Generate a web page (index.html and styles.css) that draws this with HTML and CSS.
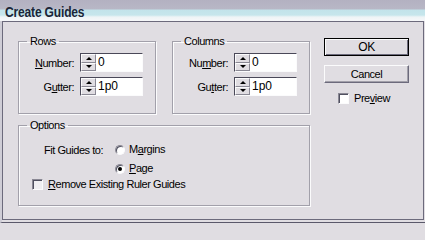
FILE: index.html
```html
<!DOCTYPE html>
<html>
<head>
<meta charset="utf-8">
<link rel="stylesheet" href="styles.css">
</head>
<body>
<div class="window">
  <div class="titlebar"><span class="title">Create Guides</span></div>
  <div class="dialog">
    <div class="main">
      <div class="top-groups">
        <fieldset class="group">
          <legend>Rows</legend>
          <div class="fields">
            <span class="lbl"><u>N</u>umber:</span>
            <div class="ctl"><div class="spin"><span class="up"></span><span class="down"></span></div><div class="input">0</div></div>
            <span class="lbl">G<u>u</u>tter:</span>
            <div class="ctl"><div class="spin"><span class="up"></span><span class="down"></span></div><div class="input">1p0</div></div>
          </div>
        </fieldset>
        <fieldset class="group">
          <legend>Columns</legend>
          <div class="fields">
            <span class="lbl">Nu<u>m</u>ber:</span>
            <div class="ctl"><div class="spin"><span class="up"></span><span class="down"></span></div><div class="input">0</div></div>
            <span class="lbl">Gu<u>t</u>ter:</span>
            <div class="ctl"><div class="spin"><span class="up"></span><span class="down"></span></div><div class="input">1p0</div></div>
          </div>
        </fieldset>
      </div>
      <fieldset class="group options">
        <legend>Options</legend>
        <div class="fit">
          <span class="fit-lbl">Fit Guides to:</span>
          <span class="opt"><span class="radio"></span><span>M<u>a</u>rgins</span></span>
          <span class="opt second"><span class="radio checked"></span><span><u>P</u>age</span></span>
        </div>
        <div class="opt remove"><span class="check"></span><span><u>R</u>emove Existing Ruler Guides</span></div>
      </fieldset>
    </div>
    <div class="side">
      <div class="btn default">OK</div>
      <div class="btn">Cancel</div>
      <div class="opt preview"><span class="check white"></span><span>Pre<u>v</u>iew</span></div>
    </div>
  </div>
</div>
</body>
</html>
```

FILE: styles.css
```css
html, body {
  margin: 0;
  padding: 0;
}
body {
  width: 425px;
  height: 223px;
  overflow: hidden;
  background: #e0dde2;
  font-family: "Liberation Sans", Arial, sans-serif;
  font-size: 11px;
  letter-spacing: -0.45px;
  color: #000;
}
.window {
  width: 425px;
  height: 223px;
  box-sizing: border-box;
  display: flex;
  flex-direction: column;
  border-bottom: 1px solid #5a586a;
  border-left: 2px solid #cfcdd6;
  padding-bottom: 2px;
}
.titlebar {
  height: 21px;
  flex: none;
  margin-left: -2px;
  background: linear-gradient(to bottom, #b3b1c1 0px, #b8b7c6 9px, #c2e3ea 10px, #c6e6ec 15px, #eef4f6 17px, #f6f7f9 21px);
  box-sizing: border-box;
  padding-left: 5px;
}
.title {
  display: block;
  font-weight: bold;
  font-size: 14px;
  letter-spacing: -0.2px;
  line-height: 15px;
  padding-top: 5px;
  color: #1b2538;
  transform: scaleX(0.86);
  transform-origin: left center;
}
.dialog {
  flex: 1;
  display: flex;
  margin-right: 1px;
  border: 1px solid #6c6a7c;
  padding: 13px 0 0 15px;
}
.main {
  width: 292px;
  display: flex;
  flex-direction: column;
  gap: 5px;
}
.top-groups {
  display: flex;
  gap: 16px;
}
.group {
  margin: 0;
  padding: 6px 0 17px 0;
  border: 1px solid #a2a0aa;
  box-shadow: inset 1px 1px 0 #fbfbfc, 1px 1px 0 #fbfbfc;
  min-width: 0;
}
.top-groups .group {
  width: 138px;
  box-sizing: border-box;
}
legend {
  margin-left: 8px;
  padding: 0 3px;
  line-height: 12px;
}
.fields {
  display: grid;
  grid-template-columns: 55px 63px;
  column-gap: 6px;
  row-gap: 5px;
  align-items: center;
}
.lbl {
  text-align: right;
}
.ctl {
  display: flex;
  height: 19px;
  box-sizing: border-box;
  border: 1px solid;
  border-color: #4a4858 #fbfbfc #fbfbfc #4a4858;
}
.spin {
  width: 15px;
  display: flex;
  flex-direction: column;
  background: #9a98a4;
}
.spin span {
  flex: 1;
  display: flex;
  align-items: center;
  justify-content: center;
  background: #e0dde2;
  border: 1px solid;
  border-color: #fbfbfc #8a8894 #8a8894 #fbfbfc;
}
.up::before {
  content: "";
  border-left: 3px solid transparent;
  border-right: 3px solid transparent;
  border-bottom: 3px solid #000;
}
.down::before {
  content: "";
  border-left: 3px solid transparent;
  border-right: 3px solid transparent;
  border-top: 3px solid #000;
}
.input {
  flex: 1;
  background: #fff;
  padding-left: 2px;
  font-size: 12px;
  line-height: 17px;
  letter-spacing: 0;
}
.options {
  padding: 12px 0 14px 0;
}
.fit {
  display: grid;
  grid-template-columns: 71px auto;
  row-gap: 6px;
  padding-left: 25px;
  align-items: center;
}
.opt {
  display: flex;
  align-items: center;
  gap: 4px;
  line-height: 13px;
}
.second {
  grid-column: 2;
}
.radio {
  width: 10px;
  height: 10px;
  box-sizing: border-box;
  border-radius: 50%;
  background: #fff;
  border: 1px solid;
  border-color: #8a8894 #fbfbfc #fbfbfc #8a8894;
  box-shadow: inset 1px 1px 0 #505060;
  display: flex;
  align-items: center;
  justify-content: center;
}
.radio.checked::after {
  content: "";
  width: 4px;
  height: 4px;
  border-radius: 50%;
  background: #000;
}
.remove {
  margin-top: 3px;
  margin-left: 13px;
  gap: 5px;
}
.check {
  width: 11px;
  height: 11px;
  box-sizing: border-box;
  background: #f0eff2;
  border: 1px solid;
  border-color: #8a8894 #fbfbfc #fbfbfc #8a8894;
  box-shadow: inset 1px 1px 0 #505060;
}
.check.white {
  background: #fff;
}
.side {
  margin-left: 14px;
  width: 85px;
  display: flex;
  flex-direction: column;
  padding-top: 3px;
}
.btn {
  height: 18px;
  box-sizing: border-box;
  display: flex;
  align-items: center;
  justify-content: center;
  border: 1px solid;
  border-color: #fbfbfc #6c6a7c #6c6a7c #fbfbfc;
  box-shadow: inset -1px -1px 0 #a2a0aa;
  margin-bottom: 9px;
}
.btn.default {
  border: 1px solid #000;
  box-shadow: inset 1px 1px 0 #fbfbfc, inset -1px -1px 0 #6c6a7c;
  font-size: 12px;
}
.preview {
  margin-left: 14px;
  gap: 5px;
}
```
